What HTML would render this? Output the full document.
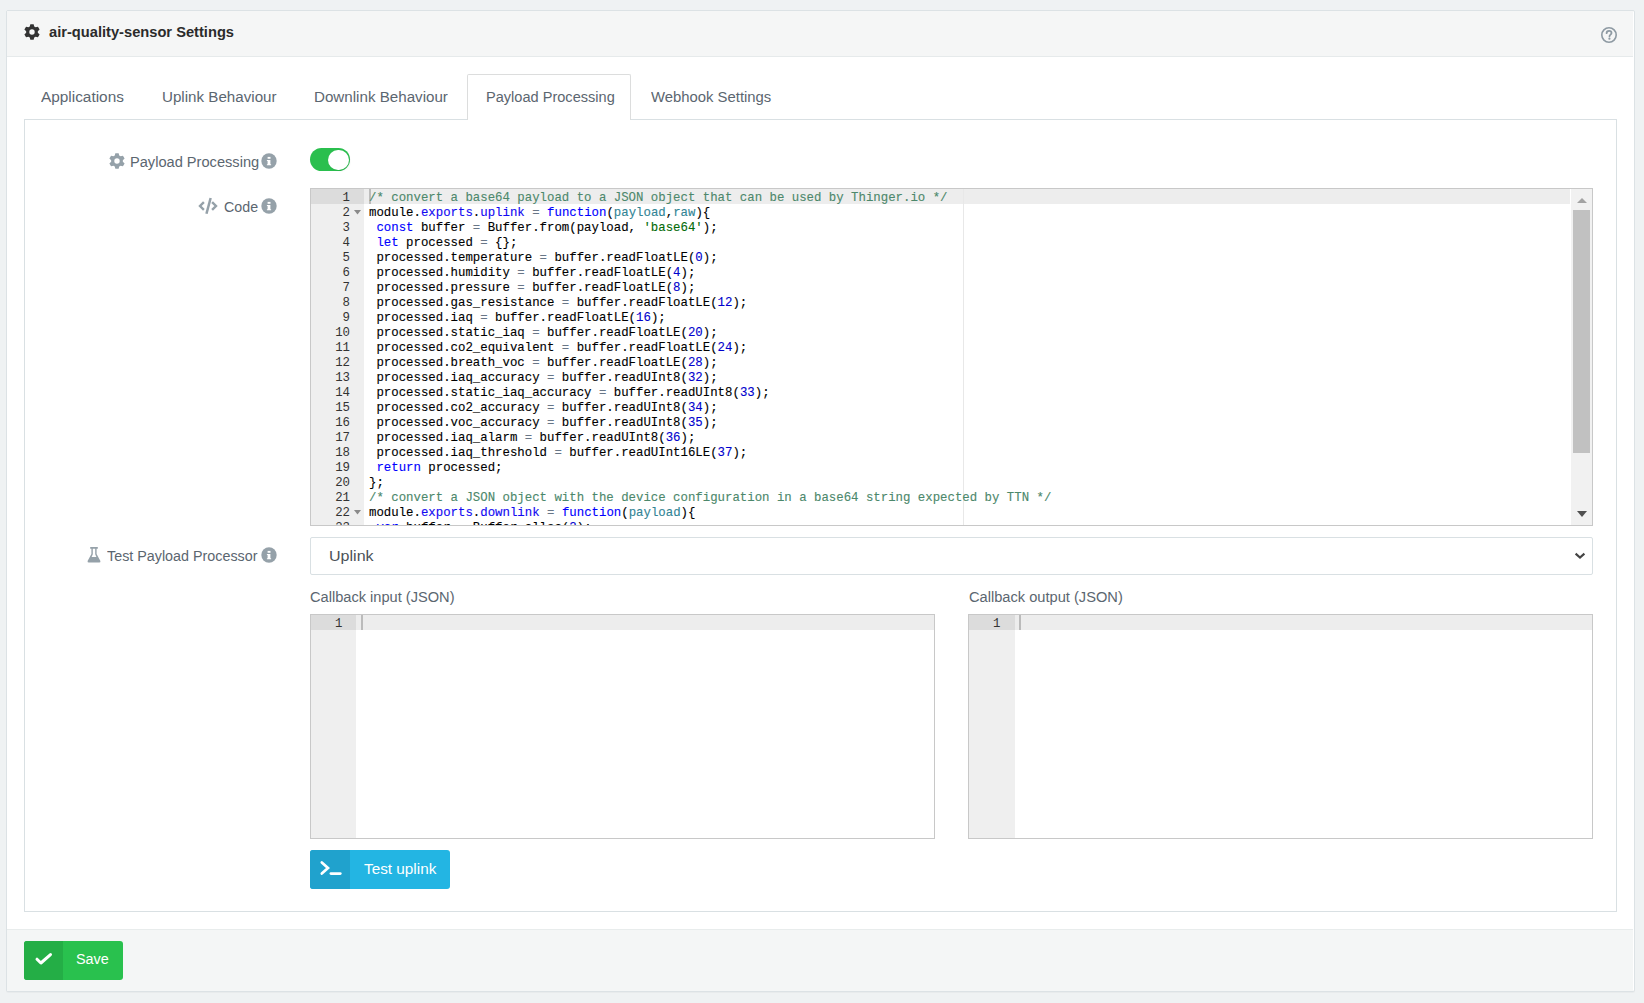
<!DOCTYPE html>
<html><head><meta charset="utf-8">
<style>
html,body{margin:0;padding:0;}
body{width:1644px;height:1003px;background:#eff2f3;position:relative;overflow:hidden;font-family:"Liberation Sans",sans-serif;}
.a{position:absolute;}
.t{position:absolute;white-space:nowrap;line-height:20px;font-size:15.5px;color:#5b6670;transform-origin:0 0;}
#panel{left:6px;top:10px;width:1627px;height:980px;background:#fff;border:1px solid #dce2e5;border-radius:2px;box-shadow:0 1px 1px rgba(0,0,0,0.03);}
#hdr{left:7px;top:11px;width:1626px;height:45px;background:#f5f6f6;border-bottom:1px solid #e6eaeb;}
#ftr{left:7px;top:929px;width:1626px;height:61px;background:#f4f6f6;border-top:1px solid #e8ecec;}
#tabbox{left:24px;top:119px;width:1591px;height:791px;border:1px solid #d9e0e3;}
#acttab{left:467px;top:74px;width:162px;height:45px;background:#fff;border:1px solid #dcdddd;border-bottom:none;border-radius:2px 2px 0 0;}
.ed{position:absolute;border:1px solid #c8c8c8;background:#fff;overflow:hidden;}
.gut{position:absolute;left:0;top:0;bottom:0;background:#efefef;}
.code{position:absolute;-webkit-text-stroke:0.12px currentColor;font-family:"Liberation Mono",monospace;font-size:12.37px;line-height:15px;white-space:pre;color:#000;}
.ln{position:absolute;font-family:"Liberation Mono",monospace;font-size:12.37px;line-height:15px;white-space:pre;color:#333;text-align:right;}
.c{color:rgb(76,136,107)}
.k{color:#0000ff}
.s{color:rgb(3,106,7)}
.n{color:rgb(0,0,205)}
.o{color:rgb(104,118,135)}
.p{color:rgb(49,132,149)}
.e{color:#1208f2}
</style></head><body>
<div id="panel" class="a"></div>
<div id="hdr" class="a"></div>
<div id="ftr" class="a"></div>

<!-- header -->
<svg class="a" style="left:24px;top:24px" width="16" height="16" viewBox="0 0 16 16"><path fill="#333" fill-rule="evenodd" d="M10.21 2.53 L9.66 0.17 L6.34 0.17 L5.79 2.53 L4.37 3.35 L2.05 2.65 L0.39 5.53 L2.16 7.18 L2.16 8.82 L0.39 10.47 L2.05 13.35 L4.37 12.65 L5.79 13.47 L6.34 15.83 L9.66 15.83 L10.21 13.47 L11.63 12.65 L13.95 13.35 L15.61 10.47 L13.84 8.82 L13.84 7.18 L15.61 5.53 L13.95 2.65 L11.63 3.35Z M10.70 8.00 A2.7 2.7 0 1 0 5.30 8.00 A2.7 2.7 0 1 0 10.70 8.00Z"/></svg>
<svg class="a" style="left:1600px;top:26px" width="18" height="18" viewBox="0 0 18 18"><circle cx="9" cy="9" r="7.2" fill="none" stroke="#8e9aa3" stroke-width="1.6"/><path d="M6.6 7.2 C6.6 5.7 7.7 4.8 9.1 4.8 C10.5 4.8 11.5 5.7 11.5 6.9 C11.5 8.6 9.5 8.6 9.5 10.3" fill="none" stroke="#8e9aa3" stroke-width="1.8" stroke-linecap="round"/><circle cx="9.4" cy="12.7" r="1.1" fill="#8e9aa3"/></svg>
<div class="t" style="left:48.5px;top:22.3px;font-weight:bold;font-size:14.6px;color:#2b2b2b;transform:scaleX(1.005)">air-quality-sensor Settings</div>

<!-- tabs -->
<div id="tabbox" class="a"></div>
<div id="acttab" class="a"></div>
<div class="t" style="left:41px;top:86.8px;transform:scaleX(0.9919)">Applications</div>
<div class="t" style="left:162px;top:86.8px;transform:scaleX(0.9774)">Uplink Behaviour</div>
<div class="t" style="left:314px;top:86.8px;transform:scaleX(0.9774)">Downlink Behaviour</div>
<div class="t" style="left:485.5px;top:86.8px;transform:scaleX(0.9397)">Payload Processing</div>
<div class="t" style="left:650.5px;top:86.8px;transform:scaleX(0.9581)">Webhook Settings</div>

<!-- labels -->
<div class="t" style="left:129.8px;top:151.7px;transform:scaleX(0.9426)">Payload Processing</div>
<div class="t" style="left:223.5px;top:196.8px;transform:scaleX(0.9194)">Code</div>
<div class="t" style="left:106.5px;top:545.8px;transform:scaleX(0.9242)">Test Payload Processor</div>

<!-- toggle -->
<div class="a" style="left:310px;top:148px;width:40px;height:23px;border-radius:12px;background:#2abf4e"></div>
<div class="a" style="left:328.3px;top:149.8px;width:20.5px;height:20.5px;border-radius:50%;background:#fff;box-shadow:1px 1px 2px rgba(0,0,0,0.08)"></div>

<!-- code editor -->
<div class="ed" style="left:310px;top:188px;width:1281px;height:336px;">
  <div class="gut" style="width:53px"></div>
  <div class="a" style="left:0;top:0;width:53px;height:15px;background:#dcdcdc"></div>
  <div class="a" style="left:53px;top:0;width:1206px;height:15px;background:#ededed"></div>
  <div class="a" style="left:652px;top:0;width:1px;height:336px;background:#e8e8e8"></div>
  <div class="a" style="left:58px;top:0;width:2px;height:15px;background:#bcbcbc"></div>
  <div class="ln" style="left:0;top:1.5px;width:39px">1
2
3
4
5
6
7
8
9
10
11
12
13
14
15
16
17
18
19
20
21
22
23</div>
  <div class="code" style="left:58px;top:1.5px"><span class="c">/* convert a base64 payload to a JSON object that can be used by Thinger.io */</span>
module.<span class="e">exports</span>.<span class="e">uplink</span> <span class="o">=</span> <span class="k">function</span>(<span class="p">payload</span>,<span class="p">raw</span>){
 <span class="k">const</span> buffer <span class="o">=</span> Buffer.from(payload, <span class="s">'base64'</span>);
 <span class="k">let</span> processed <span class="o">=</span> {};
 processed.temperature <span class="o">=</span> buffer.readFloatLE(<span class="n">0</span>);
 processed.humidity <span class="o">=</span> buffer.readFloatLE(<span class="n">4</span>);
 processed.pressure <span class="o">=</span> buffer.readFloatLE(<span class="n">8</span>);
 processed.gas_resistance <span class="o">=</span> buffer.readFloatLE(<span class="n">12</span>);
 processed.iaq <span class="o">=</span> buffer.readFloatLE(<span class="n">16</span>);
 processed.static_iaq <span class="o">=</span> buffer.readFloatLE(<span class="n">20</span>);
 processed.co2_equivalent <span class="o">=</span> buffer.readFloatLE(<span class="n">24</span>);
 processed.breath_voc <span class="o">=</span> buffer.readFloatLE(<span class="n">28</span>);
 processed.iaq_accuracy <span class="o">=</span> buffer.readUInt8(<span class="n">32</span>);
 processed.static_iaq_accuracy <span class="o">=</span> buffer.readUInt8(<span class="n">33</span>);
 processed.co2_accuracy <span class="o">=</span> buffer.readUInt8(<span class="n">34</span>);
 processed.voc_accuracy <span class="o">=</span> buffer.readUInt8(<span class="n">35</span>);
 processed.iaq_alarm <span class="o">=</span> buffer.readUInt8(<span class="n">36</span>);
 processed.iaq_threshold <span class="o">=</span> buffer.readUInt16LE(<span class="n">37</span>);
 <span class="k">return</span> processed;
};
<span class="c">/* convert a JSON object with the device configuration in a base64 string expected by TTN */</span>
module.<span class="e">exports</span>.<span class="e">downlink</span> <span class="o">=</span> <span class="k">function</span>(<span class="p">payload</span>){
 <span class="k">var</span> buffer <span class="o">=</span> Buffer.alloc(<span class="n">2</span>);</div>
  <div class="a" style="left:1260px;top:0;width:21px;height:336px;background:#f1f1f1"></div>
  <div class="a" style="left:1262px;top:21px;width:17px;height:243px;background:#c1c1c1"></div>
  <svg class="a" style="left:1266px;top:9px" width="10" height="5"><path d="M0 5L5 0L10 5Z" fill="#a3a3a3"/></svg>
  <svg class="a" style="left:1266px;top:322px" width="10" height="6"><path d="M0 0L10 0L5 6Z" fill="#505050"/></svg>
  <svg class="a" style="left:43px;top:21px" width="7" height="5"><path d="M0 0L7 0L3.5 4.5Z" fill="#8a8a8a"/></svg>
  <svg class="a" style="left:43px;top:321px" width="7" height="5"><path d="M0 0L7 0L3.5 4.5Z" fill="#8a8a8a"/></svg>
</div>

<!-- select -->
<div class="a" style="left:310px;top:537px;width:1281px;height:36px;border:1px solid #d9e0e3;border-radius:2px;background:#fff"></div>
<div class="t" style="left:328.8px;top:546.3px;color:#4a5158;transform:scaleX(1.0355)">Uplink</div>

<div class="t" style="left:310.3px;top:586.7px;transform:scaleX(0.9426)">Callback input (JSON)</div>
<div class="t" style="left:968.5px;top:586.7px;transform:scaleX(0.9445)">Callback output (JSON)</div>

<div class="ed" style="left:310px;top:614px;width:623px;height:223px;">
  <div class="gut" style="width:45px"></div>
  <div class="a" style="left:0;top:0;width:45px;height:15px;background:#dcdcdc"></div>
  <div class="a" style="left:45px;top:0;width:578px;height:15px;background:#ededed"></div>
  <div class="ln" style="left:0;top:1.5px;width:31.5px">1</div>
  <div class="a" style="left:50px;top:0;width:2px;height:15px;background:#bbb"></div>
</div>
<div class="ed" style="left:968px;top:614px;width:623px;height:223px;">
  <div class="gut" style="width:46px"></div>
  <div class="a" style="left:0;top:0;width:46px;height:15px;background:#dcdcdc"></div>
  <div class="a" style="left:46px;top:0;width:577px;height:15px;background:#ededed"></div>
  <div class="ln" style="left:0;top:1.5px;width:31.5px">1</div>
  <div class="a" style="left:50px;top:0;width:2px;height:15px;background:#bbb"></div>
</div>

<!-- test button -->
<div class="a" style="left:310px;top:850px;width:140px;height:39px;border-radius:3px;background:#23b5e3;overflow:hidden"><div class="a" style="left:0;top:0;width:40px;height:39px;background:#20a2cd"></div></div>
<div class="t" style="left:363.5px;top:858.8px;color:#fff;transform:scaleX(0.9871)">Test uplink</div>

<!-- save button -->
<div class="a" style="left:24px;top:941px;width:99px;height:39px;border-radius:3px;background:#29c14e;overflow:hidden"><div class="a" style="left:0;top:0;width:39px;height:39px;background:#24ae46"></div></div>
<div class="t" style="left:75.7px;top:949px;color:#fff;transform:scaleX(0.9290)">Save</div>
<!-- icons -->
<svg class="a" style="left:109px;top:153px" width="16" height="16" viewBox="0 0 16 16"><path fill="#95a1a9" fill-rule="evenodd" d="M10.21 2.53 L9.66 0.17 L6.34 0.17 L5.79 2.53 L4.37 3.35 L2.05 2.65 L0.39 5.53 L2.16 7.18 L2.16 8.82 L0.39 10.47 L2.05 13.35 L4.37 12.65 L5.79 13.47 L6.34 15.83 L9.66 15.83 L10.21 13.47 L11.63 12.65 L13.95 13.35 L15.61 10.47 L13.84 8.82 L13.84 7.18 L15.61 5.53 L13.95 2.65 L11.63 3.35Z M10.70 8.00 A2.7 2.7 0 1 0 5.30 8.00 A2.7 2.7 0 1 0 10.70 8.00Z"/></svg>
<svg class="a" style="left:261px;top:153px" width="16" height="16" viewBox="0 0 16 16"><circle cx="8" cy="8" r="7.7" fill="#95a1a9"/><rect x="6.6" y="3.9" width="2.9" height="1.9" fill="#fff"/><path d="M5.9 7 H9.4 V11.2 H10.1 V12.3 H5.9 V11.2 H6.6 V8.1 H5.9Z" fill="#fff"/></svg>
<svg class="a" style="left:197px;top:197px" width="22" height="18" viewBox="0 0 22 18"><path d="M6.9 5.1 L3 9 L6.9 12.9 M15.1 5.1 L19 9 L15.1 12.9" fill="none" stroke="#95a1a9" stroke-width="2.4" stroke-linecap="butt" stroke-linejoin="miter"/><path d="M13.65 1.0 L9.45 16.8" fill="none" stroke="#95a1a9" stroke-width="2.5"/></svg>
<svg class="a" style="left:261px;top:198px" width="16" height="16" viewBox="0 0 16 16"><circle cx="8" cy="8" r="7.7" fill="#95a1a9"/><rect x="6.6" y="3.9" width="2.9" height="1.9" fill="#fff"/><path d="M5.9 7 H9.4 V11.2 H10.1 V12.3 H5.9 V11.2 H6.6 V8.1 H5.9Z" fill="#fff"/></svg>
<svg class="a" style="left:86px;top:546px" width="16" height="18" viewBox="0 0 16 18"><path fill="#95a1a9" fill-rule="evenodd" d="M4.2 1.1 H11.8 V2.8 H10.6 V8 L14.4 15 Q14.7 16.6 13.2 16.6 H2.8 Q1.3 16.6 1.6 15 L5.4 8 V2.8 H4.2Z M6.8 2.8 V8.2 L5.6 11.1 H10.4 L9.2 8.2 V2.8Z"/></svg>
<svg class="a" style="left:261px;top:547px" width="16" height="16" viewBox="0 0 16 16"><circle cx="8" cy="8" r="7.7" fill="#95a1a9"/><rect x="6.6" y="3.9" width="2.9" height="1.9" fill="#fff"/><path d="M5.9 7 H9.4 V11.2 H10.1 V12.3 H5.9 V11.2 H6.6 V8.1 H5.9Z" fill="#fff"/></svg>
<svg class="a" style="left:1573px;top:550px" width="14" height="12" viewBox="0 0 14 12"><path d="M2.6 3.6 L7 7.6 L11.4 3.6" fill="none" stroke="#444" stroke-width="2.1"/></svg>
<svg class="a" style="left:318px;top:859px" width="26" height="18" viewBox="0 0 26 18"><path d="M3.8 3.4 L10 9 L3.8 14.6" fill="none" stroke="#fff" stroke-width="2.7" stroke-linecap="round" stroke-linejoin="miter"/><path d="M12.9 14.6 H22.3" fill="none" stroke="#fff" stroke-width="2.7" stroke-linecap="round"/></svg>
<svg class="a" style="left:34px;top:951px" width="20" height="16" viewBox="0 0 20 16"><path d="M3 8.2 L6.9 12 L16.5 3.6" fill="none" stroke="#fff" stroke-width="3" stroke-linecap="round" stroke-linejoin="round"/></svg>
</body></html>
